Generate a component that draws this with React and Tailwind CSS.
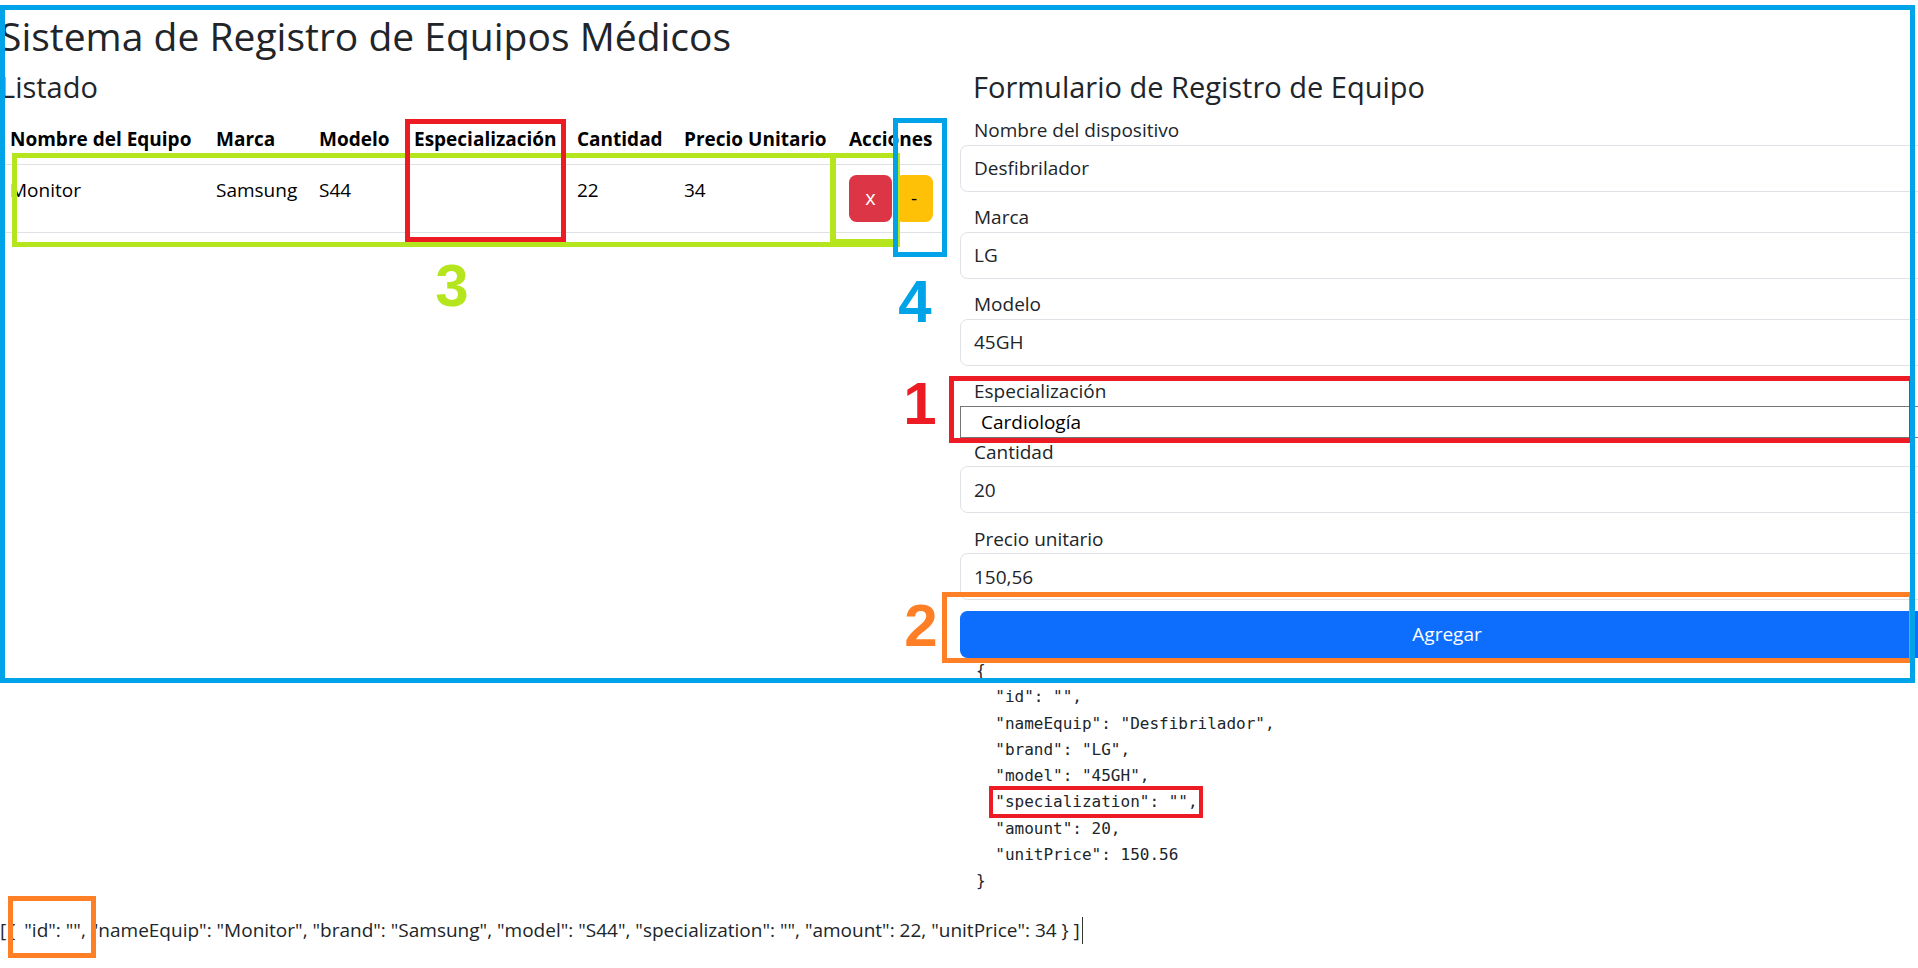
const sans = { fontFamily: '"Open Sans", "Noto Sans", sans-serif' };

const columns = [
  { label: "Nombre del Equipo", w: "w-[206px]" },
  { label: "Marca", w: "w-[103px]" },
  { label: "Modelo", w: "w-[95px]" },
  { label: "Especialización", w: "w-[163px]" },
  { label: "Cantidad", w: "w-[107px]" },
  { label: "Precio Unitario", w: "w-[163px]" },
];

const rows = [
  { nameEquip: "Monitor", brand: "Samsung", model: "S44", specialization: "", amount: 22, unitPrice: 34 },
];

const current = {
  id: "",
  nameEquip: "Desfibrilador",
  brand: "LG",
  model: "45GH",
  specialization: "",
  amount: 20,
  unitPrice: 150.56,
};

function Field({ label, value, last }) {
  return (
    <div>
      <label className="block pl-[14px] text-[19px] leading-[28.5px] text-[#212529]">{label}</label>
      <input
        readOnly
        value={value}
        className={
          "block w-full h-[47px] px-[13px] text-[19px] text-[#212529] border border-[#dee2e6] rounded-[7.5px] bg-white outline-none " +
          (last ? "mb-[10.6px]" : "mb-[11.5px]")
        }
      />
    </div>
  );
}

function Mark({ className }) {
  return <div className={"absolute pointer-events-none " + className} />;
}

function Digit({ children, className }) {
  return (
    <div
      className={"absolute w-[40px] h-[60px] text-center text-[60px] leading-[60px] font-bold pointer-events-none " + className}
      style={{ fontFamily: '"Liberation Sans", Arial, sans-serif' }}
    >
      {children}
    </div>
  );
}

export default function App() {
  return (
    <div className="relative w-[1918px] h-[968px] overflow-hidden bg-white text-[#212529]" style={sans}>
      <div className="w-[1934px] pt-[13px]">
        <h1 className="text-[39px] leading-[46.8px] font-medium mb-[10.2px]">
          Sistema de Registro de Equipos Médicos
        </h1>

        <div className="flex">
          {/* listado */}
          <div className="w-[960px]">
            <h3 className="text-[29px] leading-[34.8px] font-medium mb-[10.6px]">Listado</h3>
            <table className="w-[944px] table-fixed border-collapse text-[19px] leading-[28.5px] text-black">
              <thead>
                <tr className="border-b border-[#dee2e6]">
                  {columns.map((c) => (
                    <th key={c.label} className={c.w + " text-left font-bold pl-[10px] py-[10px] whitespace-nowrap"}>
                      {c.label}
                    </th>
                  ))}
                  <th className="text-left font-bold pl-[12px] py-[10px] whitespace-nowrap">Acciones</th>
                </tr>
              </thead>
              <tbody>
                {rows.map((r) => (
                  <tr key={r.nameEquip} className="border-b border-[#dee2e6]">
                    <td className="align-top pl-[10px] pt-[11px] pb-[10px]">{r.nameEquip}</td>
                    <td className="align-top pl-[10px] pt-[11px] pb-[10px]">{r.brand}</td>
                    <td className="align-top pl-[10px] pt-[11px] pb-[10px]">{r.model}</td>
                    <td className="align-top pl-[10px] pt-[11px] pb-[10px]">{r.specialization}</td>
                    <td className="align-top pl-[10px] pt-[11px] pb-[10px]">{r.amount}</td>
                    <td className="align-top pl-[10px] pt-[11px] pb-[10px]">{r.unitPrice}</td>
                    <td className="align-top pl-[12px] py-[10px]">
                      <div className="flex gap-[3px]">
                        <button className="w-[43px] h-[47px] rounded-[7.5px] bg-[#dc3545] text-white text-[20px]">x</button>
                        <button className="w-[38px] h-[47px] rounded-[7.5px] bg-[#ffc107] text-black text-[19px]">-</button>
                      </div>
                    </td>
                  </tr>
                ))}
              </tbody>
            </table>
          </div>

          {/* formulario */}
          <div className="w-[974px]">
            <h2 className="pl-[13px] text-[29px] leading-[34.8px] font-medium mb-[11.6px]">
              Formulario de Registro de Equipo
            </h2>
            <Field label="Nombre del dispositivo" value={current.nameEquip} />
            <Field label="Marca" value={current.brand} />
            <Field label="Modelo" value={current.model} />
            <div>
              <label className="block pl-[14px] text-[19px] leading-[28.5px]">Especialización</label>
              <select
                defaultValue="cardio"
                className="block w-full h-[32px] pl-[20px] text-[19px] text-black border border-[#767676] bg-white appearance-none outline-none"
              >
                <option value="cardio">Cardiología</option>
              </select>
            </div>
            <Field label="Cantidad" value={String(current.amount)} />
            <Field label="Precio unitario" value="150,56" last />
            <button className="block w-full h-[47px] rounded-[7.5px] bg-[#0d6efd] text-white text-[19px]">Agregar</button>
            <pre
              className="pl-[16px] text-[16px] leading-[26.3px] text-[#212529] mb-[21px]"
              style={{ fontFamily: '"DejaVu Sans Mono", "Liberation Mono", monospace' }}
            >
              {JSON.stringify(current, null, 2)}
            </pre>
          </div>
        </div>

        <div className="text-[19px] leading-[28.5px] text-[#212529] whitespace-nowrap">
          <span className="tracking-[2px]">[{"{"} </span>
          "id": "", "nameEquip": "Monitor", "brand": "Samsung", "model": "S44", "specialization": "", "amount": 22, "unitPrice": 34 {"}"} ]
          <span className="inline-block ml-[2px] w-[1.5px] h-[27px] bg-[#333] align-[-7px]" />
        </div>
      </div>

      {/* annotations drawn over the screenshot */}
      <Mark className="left-[12px] top-[153px] w-[823px] h-[94px] border-[5px] border-[#b5e61d]" />
      <Mark className="left-[831px] top-[153px] w-[69px] h-[94px] border-[5px] border-b-[8px] border-[#b5e61d]" />
      <Mark className="left-[405px] top-[119px] w-[161px] h-[123px] border-[5px] border-[#ed1c24]" />
      <Mark className="left-[949px] top-[376px] w-[965px] h-[67px] border-[5px] border-[#ed1c24]" />
      <Mark className="left-[942px] top-[592px] w-[972px] h-[71px] border-[5px] border-[#ff7f27]" />
      <Mark className="left-[989px] top-[786px] w-[214px] h-[32px] border-[4px] border-[#ed1c24]" />
      <Mark className="left-[8px] top-[896px] w-[88px] h-[62px] border-[5px] border-[#ff7f27]" />
      <Mark className="left-0 top-[5px] w-[1915px] h-[678px] border-[5px] border-[#00a2e8]" />
      <Mark className="left-[893px] top-[118px] w-[54px] h-[139px] border-[5px] border-[#00a2e8]" />

      <Digit className="left-[432px] top-[256px] text-[#b5e61d]">3</Digit>
      <Digit className="left-[895px] top-[272px] text-[#00a2e8]">4</Digit>
      <Digit className="left-[900px] top-[374px] text-[#ed1c24]">1</Digit>
      <Digit className="left-[901px] top-[596px] text-[#ff7f27]">2</Digit>
    </div>
  );
}
